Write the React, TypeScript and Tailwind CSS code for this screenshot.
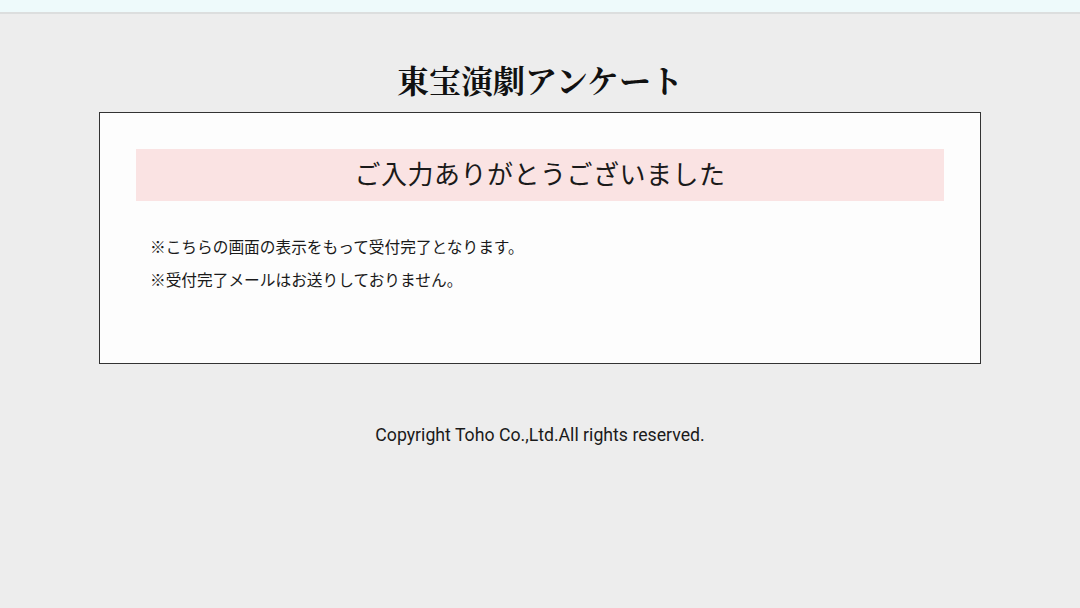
export default function App() {
  return (
    <div
      className="min-h-[608px] bg-[#ededed] text-[#1a1a1a]"
      style={{ fontFamily: 'Roboto, "Noto Sans CJK JP", sans-serif' }}
    >
      <div className="h-[14px] bg-[#eefafb] border-b-2 border-[#dcdede]" />
      <div className="w-[882px] mx-auto">
        <h1
          className="pt-[45px] pb-[13px] text-center text-[32px] leading-[40px] font-bold text-[#111]"
          style={{ fontFamily: '"Noto Serif CJK JP", "Noto Sans CJK JP", serif' }}
        >
          東宝演劇アンケート
        </h1>
        <div className="border border-[#333] bg-[#fdfdfd] px-9 pt-9 pb-[66px]">
          <div className="h-[52px] bg-[#fae3e3] flex items-center justify-center text-[26px] tracking-[0.5px]">
            ご入力ありがとうございました
          </div>
          <div className="mt-[30px] pl-[14px] text-[15.7px] leading-[33px]">
            <p>※こちらの画面の表示をもって受付完了となります。</p>
            <p>※受付完了メールはお送りしておりません。</p>
          </div>
        </div>
      </div>
      <p className="mt-[59px] text-center text-[17.7px] leading-[24px]">
        Copyright Toho Co.,Ltd.All rights reserved.
      </p>
    </div>
  );
}
